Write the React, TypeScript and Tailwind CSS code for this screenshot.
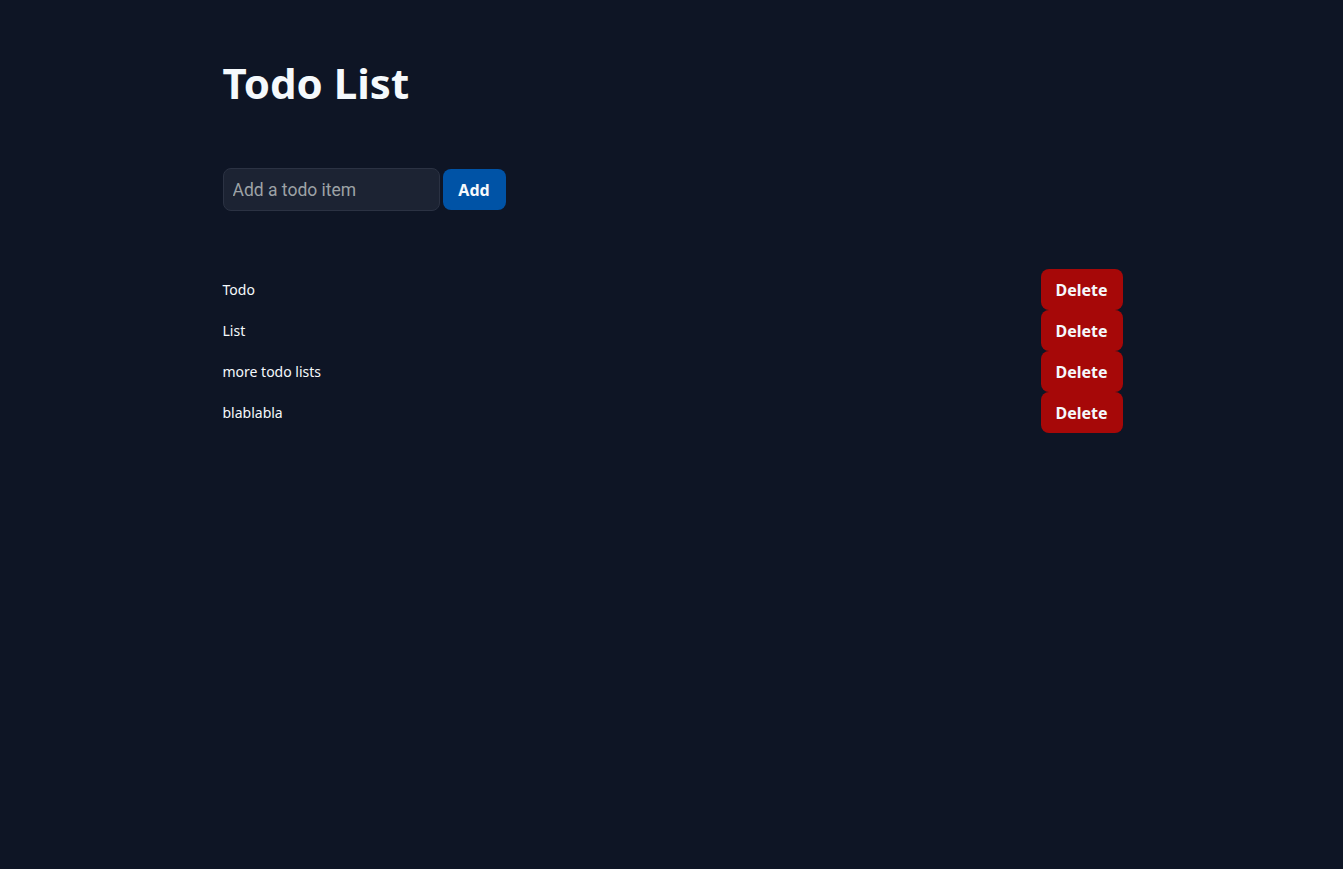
import { useState } from "react";

const initialTodos = ["Todo", "List", "more todo lists", "blablabla"];

export default function App() {
  const [todos, setTodos] = useState<string[]>(initialTodos);
  const [text, setText] = useState("");

  const addTodo = () => {
    if (!text.trim()) return;
    setTodos([...todos, text.trim()]);
    setText("");
  };

  return (
    <div
      className="min-h-screen w-full bg-[#0e1525] text-white"
      style={{ fontFamily: '"Noto Sans", "Open Sans", sans-serif' }}
    >
      <div className="mx-auto w-[902px] pl-[2px] pt-[55px]">
        <h1 className="text-[42px] font-bold leading-[56px] text-[#f5f9fc]">Todo List</h1>

        <div className="mt-[57px] flex items-center gap-[3px]">
          <input
            value={text}
            onChange={(e) => setText(e.target.value)}
            placeholder="Add a todo item"
            className="h-[43px] w-[217px] rounded-lg border border-[#2b3243] bg-[#1c2333] px-[9px] text-[17.5px] text-[#f5f9fc] placeholder:text-[#9da2a6] outline-none"
            style={{ fontFamily: "Roboto, sans-serif" }}
          />
          <button
            onClick={addTodo}
            className="h-[41px] w-[63px] rounded-lg bg-[#0053a6] text-[16px] font-bold text-[#f5f9fc]"
          >
            Add
          </button>
        </div>

        <ul className="mt-[58px] flex flex-col">
          {todos.map((todo, i) => (
            <li key={i} className="flex h-[41px] items-center justify-between">
              <span className="text-[14px] text-[#f5f9fc]">{todo}</span>
              <button
                onClick={() => setTodos(todos.filter((_, j) => j !== i))}
                className="h-[41px] w-[82px] rounded-lg bg-[#a60808] text-[16px] font-bold text-[#f5f9fc]"
              >
                Delete
              </button>
            </li>
          ))}
        </ul>
      </div>
    </div>
  );
}
